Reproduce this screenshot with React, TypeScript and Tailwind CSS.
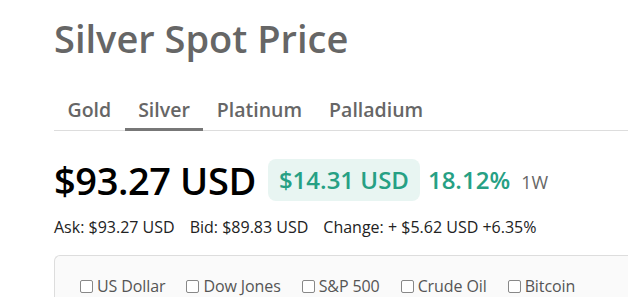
const tabs = ["Gold", "Silver", "Platinum", "Palladium"];
const compare = ["US Dollar", "Dow Jones", "S&P 500", "Crude Oil", "Bitcoin"];

export default function App() {
  return (
    <div className="h-screen bg-white pl-[54px] pt-[13px] font-['Open_Sans',sans-serif] overflow-hidden">
      <h1 className="text-[38px] leading-[50px] font-semibold text-[#666]">Silver Spot Price</h1>

      {/* Metal tabs */}
      <div className="mt-[33px] flex border-b border-[#ddd]">
        {tabs.map((t) => (
          <div
            key={t}
            className={`px-[13.5px] pb-[5px] text-[19.5px] leading-[27px] font-semibold text-[#666] border-b-[3px] -mb-px ${
              t === "Silver" ? "border-[#777]" : "border-transparent"
            }`}
          >
            {t}
          </div>
        ))}
      </div>

      {/* Price row */}
      <div className="mt-[27px] flex items-center">
        <span className="text-[38px] leading-[44px] font-semibold text-black tracking-[-0.4px]">$93.27 USD</span>
        <span className="ml-[12px] rounded-[8px] bg-[#e8f5f2] px-[11px] py-[6px] text-[24px] leading-[30px] font-semibold text-[#26a084]">
          $14.31 USD
        </span>
        <span className="ml-[8px] text-[24px] font-semibold text-[#26a084]">18.12%</span>
        <span className="ml-[11px] text-[18px] text-[#666] mt-[4px]">1W</span>
      </div>

      {/* Ask / Bid / Change */}
      <div className="mt-[14px] flex gap-[15px] text-[16px] leading-[22px] text-[#222]">
        <span>Ask: $93.27 USD</span>
        <span>Bid: $89.83 USD</span>
        <span>Change: + $5.62 USD +6.35%</span>
      </div>

      {/* Compare box */}
      <div className="mt-[17px] rounded-tl-[6px] border border-r-0 border-[#ddd] bg-[#fafafa] pl-[25px] pt-[20px] pb-[20px]">
        <div className="flex gap-[21px]">
          {compare.map((c) => (
            <label key={c} className="flex items-center gap-[4px] text-[16px] leading-[20px] text-[#555] tracking-[-0.1px]">
              <span className="inline-block w-[13px] h-[13px] border-[1.5px] border-[#888] rounded-[2px] bg-white" />
              {c}
            </label>
          ))}
        </div>
      </div>
    </div>
  );
}
